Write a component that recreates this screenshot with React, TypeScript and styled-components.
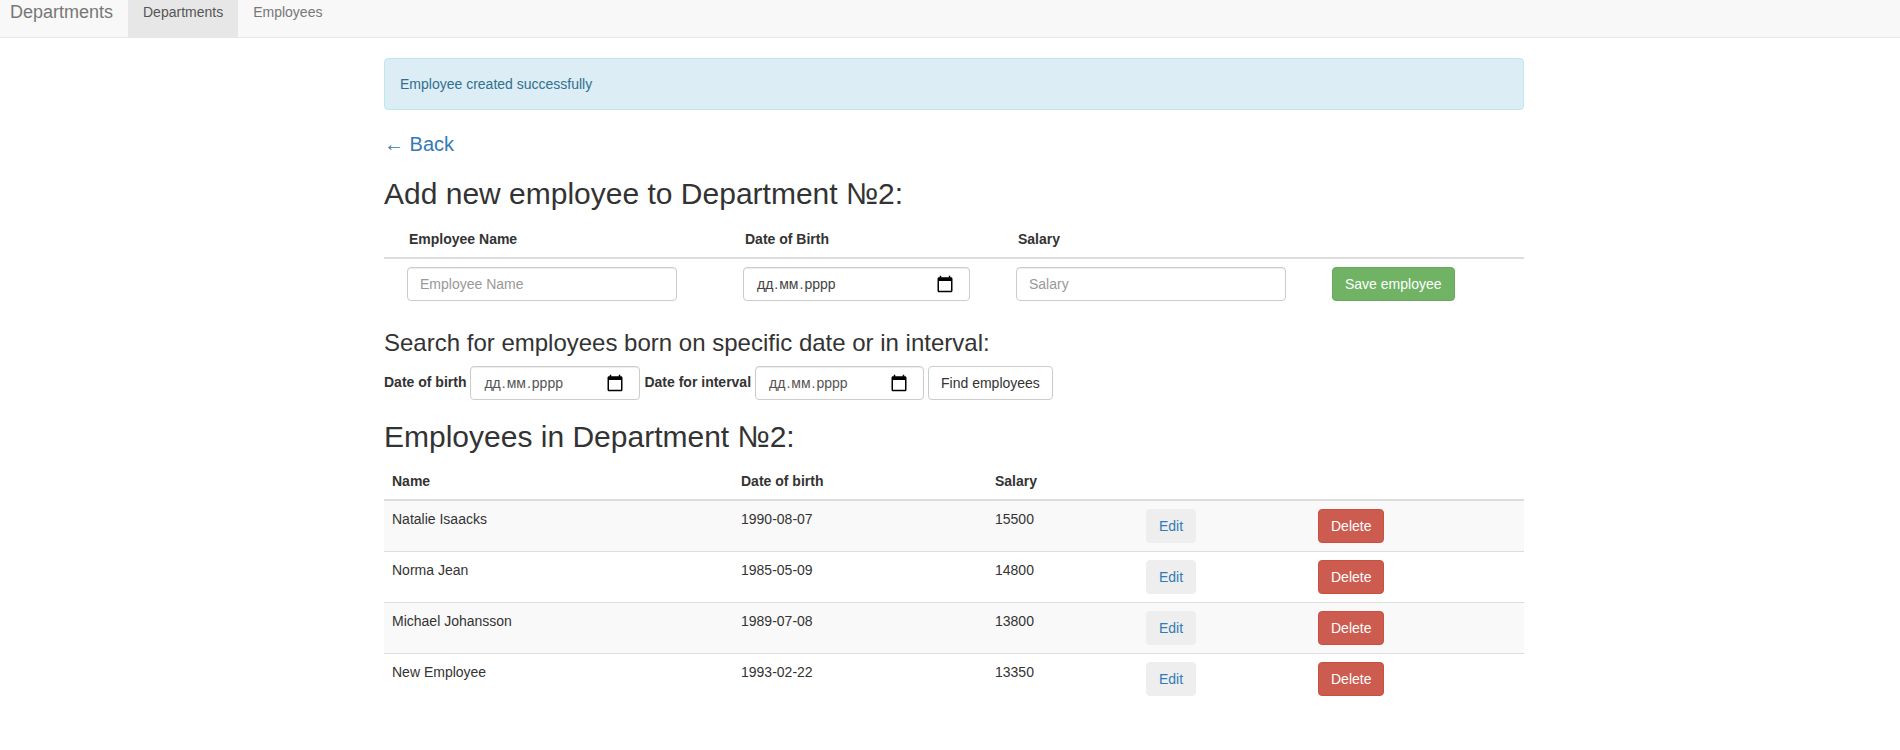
import React from 'react'
import styled, { createGlobalStyle } from 'styled-components'

const GlobalStyle = createGlobalStyle`
    * {
        box-sizing: border-box;
    }
    body {
        margin: 0;
        background: #fff;
        color: #333;
        font-family: 'Liberation Sans', Arial, sans-serif;
        font-size: 14px;
        line-height: 20px;
    }
`

const Navbar = styled.nav`
    display: flex;
    height: 38px;
    background-color: #f8f8f8;
    border-bottom: 1px solid #e7e7e7;
`
const Brand = styled.a`
    padding: 2px 12px 0 10px;
    width: 128px;
    font-size: 18px;
    color: #777;
`
const NavLink = styled.a<{ $active?: boolean }>`
    padding: 2px 15px 0;
    color: ${({ $active }) => ($active ? '#555' : '#777')};
    background-color: ${({ $active }) => ($active ? '#e7e7e7' : 'transparent')};
`
const Container = styled.main`
    width: 1140px;
    margin: 20px 0 0 384px;
`
const Alert = styled.div`
    padding: 15px;
    margin-bottom: 20px;
    color: #31708f;
    background-color: #dcedf6;
    border: 1px solid #bce8f1;
    border-radius: 4px;
`
const BackLink = styled.a`
    display: block;
    padding: 2px 0 1px;
    font-size: 20px;
    line-height: 24px;
    color: #337ab7;
`
const Title = styled.h3`
    margin: 20px 0 10px;
    font-size: 30px;
    font-weight: 500;
    line-height: 33px;
`
const SubTitle = styled.h4`
    margin: 21px 0 10px;
    font-size: 24px;
    font-weight: 500;
    line-height: 26px;
`
const Table = styled.table`
    width: 100%;
    table-layout: fixed;
    border-collapse: collapse;
`
const AddTable = styled(Table)`
    margin-top: 11px;
`
const Th = styled.th<{ $width: number; $pad?: number }>`
    width: ${({ $width }) => $width}px;
    padding: 8px 8px 8px ${({ $pad }) => $pad ?? 8}px;
    text-align: left;
    font-weight: 700;
    border-bottom: 2px solid #ddd;
`
const FormCell = styled.td`
    padding: 8px 8px 8px 23px;
    vertical-align: top;
`
const Row = styled.tr<{ $striped: boolean }>`
    background-color: ${({ $striped }) => ($striped ? '#f9f9f9' : 'transparent')};
    border-bottom: 1px solid #ddd;
    &:last-child {
        border-bottom: 0;
    }
`
const Td = styled.td`
    padding: 8px;
    height: 51px;
    vertical-align: top;
`
const TextInput = styled.input<{ $width: number }>`
    display: block;
    width: ${({ $width }) => $width}px;
    height: 34px;
    padding: 6px 12px;
    font: inherit;
    color: #555;
    background: #fff;
    border: 1px solid #ccc;
    border-radius: 4px;
    box-shadow: inset 0 1px 1px rgba(0, 0, 0, 0.075);
    &::placeholder {
        color: #999;
        opacity: 1;
    }
`
const DateBox = styled.div<{ $width: number }>`
    display: flex;
    align-items: center;
    justify-content: space-between;
    flex: none;
    width: ${({ $width }) => $width}px;
    height: 34px;
    padding: 0 15px 0 12px;
    background: #fff;
    border: 1px solid #ccc;
    border-radius: 4px;
    box-shadow: inset 0 1px 1px rgba(0, 0, 0, 0.075);
`
const DateText = styled.span<{ $dark?: boolean }>`
    color: ${({ $dark }) => ($dark ? '#444' : '#555')};
`
const DatePart = styled.span`
    padding: 0 1px;
`
const CalendarSvg = styled.svg`
    display: block;
    width: 18px;
    height: 18px;
`
const Button = styled.button<{ $kind: 'success' | 'default' | 'light' | 'danger' }>`
    display: inline-block;
    height: 34px;
    padding: 6px 12px;
    font: inherit;
    white-space: nowrap;
    border-radius: 4px;
    border: 1px solid
        ${({ $kind }) =>
            ({ success: '#6aa85f', default: '#ccc', light: '#eee', danger: '#c9503f' })[$kind]};
    color: ${({ $kind }) =>
        ({ success: '#fff', default: '#333', light: '#337ab7', danger: '#fff' })[$kind]};
    background-color: ${({ $kind }) =>
        ({ success: '#70b365', default: '#fff', light: '#eee', danger: '#cd5c50' })[$kind]};
`
const SearchForm = styled.form`
    display: flex;
    align-items: center;
    gap: 4px;
`
const SearchLabel = styled.label`
    font-weight: 700;
    margin-bottom: 2px;
`

const rows = [
    { name: 'Natalie Isaacks', born: '1990-08-07', salary: 15500 },
    { name: 'Norma Jean', born: '1985-05-09', salary: 14800 },
    { name: 'Michael Johansson', born: '1989-07-08', salary: 13800 },
    { name: 'New Employee', born: '1993-02-22', salary: 13350 },
]

const DateField: React.FC<{ width: number; dark?: boolean }> = ({ width, dark }) => (
    <DateBox $width={width}>
        <DateText $dark={dark}>
            <DatePart>дд</DatePart>.<DatePart>мм</DatePart>.<DatePart>рррр</DatePart>
        </DateText>
        <CalendarSvg viewBox="0 0 24 24">
            <path d="M20 3h-1V1h-2v2H7V1H5v2H4c-1.1 0-2 .9-2 2v16c0 1.1.9 2 2 2h16c1.1 0 2-.9 2-2V5c0-1.1-.9-2-2-2zm0 18H4V8h16v13z" />
        </CalendarSvg>
    </DateBox>
)

const App: React.FC = () => (
    <>
        <GlobalStyle />
        <Navbar>
            <Brand>Departments</Brand>
            <NavLink $active>Departments</NavLink>
            <NavLink>Employees</NavLink>
        </Navbar>
        <Container>
            <Alert>Employee created successfully</Alert>
            <BackLink>← Back</BackLink>
            <Title>Add new employee to Department №2:</Title>
            <AddTable>
                <thead>
                    <tr>
                        <Th $width={336} $pad={25}>Employee Name</Th>
                        <Th $width={273} $pad={25}>Date of Birth</Th>
                        <Th $width={316} $pad={25}>Salary</Th>
                        <Th $width={215} />
                    </tr>
                </thead>
                <tbody>
                    <tr>
                        <FormCell>
                            <TextInput $width={270} placeholder="Employee Name" />
                        </FormCell>
                        <FormCell>
                            <DateField width={227} dark />
                        </FormCell>
                        <FormCell>
                            <TextInput $width={270} placeholder="Salary" />
                        </FormCell>
                        <FormCell>
                            <Button $kind="success">Save employee</Button>
                        </FormCell>
                    </tr>
                </tbody>
            </AddTable>
            <SubTitle>Search for employees born on specific date or in interval:</SubTitle>
            <SearchForm>
                <SearchLabel>Date of birth</SearchLabel>
                <DateField width={170} />
                <SearchLabel>Date for interval</SearchLabel>
                <DateField width={169} />
                <Button $kind="default">Find employees</Button>
            </SearchForm>
            <Title>Employees in Department №2:</Title>
            <Table>
                <thead>
                    <tr>
                        <Th $width={349}>Name</Th>
                        <Th $width={254}>Date of birth</Th>
                        <Th $width={151}>Salary</Th>
                        <Th $width={172} />
                        <Th $width={214} />
                    </tr>
                </thead>
                <tbody>
                    {rows.map((row, i) => (
                        <Row key={row.name} $striped={i % 2 === 0}>
                            <Td>{row.name}</Td>
                            <Td>{row.born}</Td>
                            <Td>{row.salary}</Td>
                            <Td>
                                <Button $kind="light">Edit</Button>
                            </Td>
                            <Td>
                                <Button $kind="danger">Delete</Button>
                            </Td>
                        </Row>
                    ))}
                </tbody>
            </Table>
        </Container>
    </>
)

export default App
